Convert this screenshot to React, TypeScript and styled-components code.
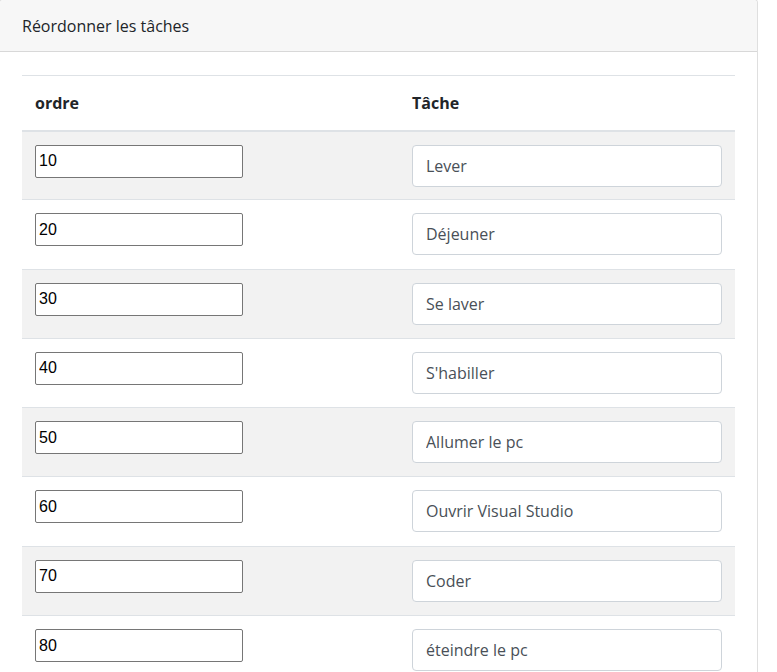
import React from "react";
import styled, { createGlobalStyle } from "styled-components";

const GlobalStyle = createGlobalStyle`
  html, body { margin: 0; padding: 0; background: #fff; }
  body { font-family: "Open Sans", "Noto Sans", sans-serif; color: #212529; overflow: hidden; }
`;

const Card = styled.div`
  margin: -1px 0 0 -1px;
  width: 759px;
  box-sizing: border-box;
  border: 1px solid rgba(0, 0, 0, 0.125);
  border-radius: 4px;
  background: #fff;
`;

const CardHeader = styled.div`
  height: 52px;
  box-sizing: border-box;
  padding: 1px 22px 0;
  display: flex;
  align-items: center;
  background: #f7f7f7;
  border-bottom: 1px solid rgba(0, 0, 0, 0.125);
  font-size: 16px;
  color: #212529;
  border-radius: 4px 4px 0 0;
`;

const CardBody = styled.div`
  padding: 23px 22px 0 22px;
`;

const Table = styled.table`
  width: 713px;
  border-collapse: collapse;
  table-layout: fixed;
`;

const HeadCell = styled.th`
  height: 55px;
  box-sizing: border-box;
  padding: 0 13px;
  text-align: left;
  vertical-align: middle;
  font-size: 16px;
  font-weight: 700;
  color: #212529;
  border-top: 1px solid #dee2e6;
  border-bottom: 2px solid #dee2e6;
`;

const Row = styled.tr<{ $striped: boolean }>`
  background: ${(p) => (p.$striped ? "#f2f2f2" : "transparent")};
`;

const Cell = styled.td`
  height: 69.3px;
  box-sizing: border-box;
  padding: 13px 13px 0;
  vertical-align: top;
  border-bottom: 1px solid #dee2e6;
`;

const OrderInput = styled.input`
  display: block;
  width: 208px;
  height: 33px;
  box-sizing: border-box;
  margin: 0;
  padding: 0 3px;
  border: 1px solid #767676;
  border-radius: 2px;
  background: #fff;
  font-family: "Liberation Sans", Arial, sans-serif;
  font-size: 16px;
  color: #000;
  outline: none;
`;

const TaskInput = styled.input`
  display: block;
  width: 310px;
  height: 42px;
  box-sizing: border-box;
  margin: 0;
  padding: 0 13px;
  border: 1px solid #ced4da;
  border-radius: 4px;
  background: #fff;
  font-family: "Open Sans", "Noto Sans", sans-serif;
  font-size: 16px;
  color: #495057;
  outline: none;
`;

const tasks: [number, string][] = [
  [10, "Lever"],
  [20, "Déjeuner"],
  [30, "Se laver"],
  [40, "S'habiller"],
  [50, "Allumer le pc"],
  [60, "Ouvrir Visual Studio"],
  [70, "Coder"],
  [80, "éteindre le pc"],
];

export default function App() {
  return (
    <>
      <GlobalStyle />
      <Card>
        <CardHeader>Réordonner les tâches</CardHeader>
        <CardBody>
          <Table>
            <colgroup>
              <col style={{ width: 377 }} />
              <col />
            </colgroup>
            <thead>
              <tr>
                <HeadCell>ordre</HeadCell>
                <HeadCell>Tâche</HeadCell>
              </tr>
            </thead>
            <tbody>
              {tasks.map(([order, name], i) => (
                <Row key={order} $striped={i % 2 === 0}>
                  <Cell>
                    <OrderInput type="text" defaultValue={String(order)} />
                  </Cell>
                  <Cell>
                    <TaskInput type="text" defaultValue={name} />
                  </Cell>
                </Row>
              ))}
            </tbody>
          </Table>
        </CardBody>
      </Card>
    </>
  );
}
